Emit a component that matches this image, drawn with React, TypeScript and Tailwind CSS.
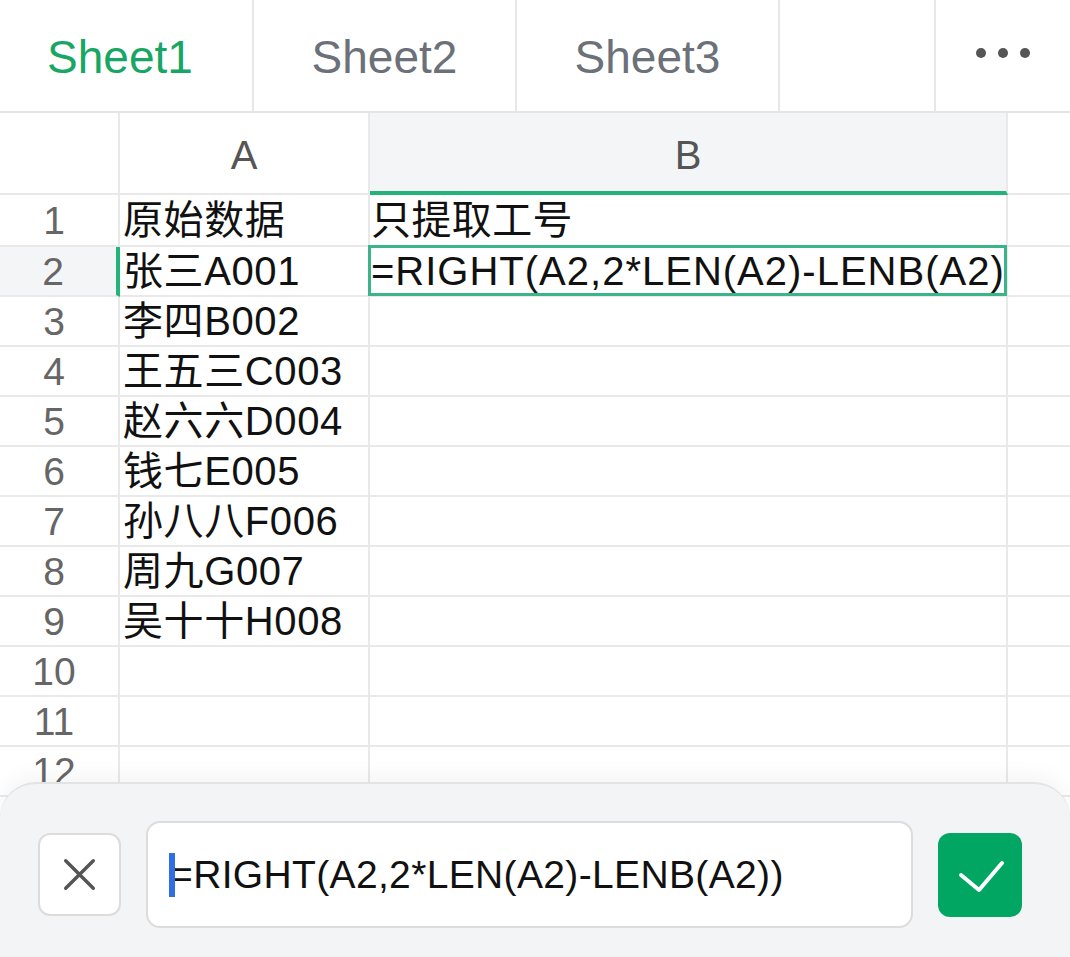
const ROWS: readonly { a: string; b: string }[] = [
  { a: '原始数据', b: '只提取工号' },
  { a: '张三A001', b: '=RIGHT(A2,2*LEN(A2)-LENB(A2)' },
  { a: '李四B002', b: '' },
  { a: '王五三C003', b: '' },
  { a: '赵六六D004', b: '' },
  { a: '钱七E005', b: '' },
  { a: '孙八八F006', b: '' },
  { a: '周九G007', b: '' },
  { a: '吴十十H008', b: '' },
  { a: '', b: '' },
  { a: '', b: '' },
  { a: '', b: '' },
]

const TABS = [
  { label: 'Sheet1', width: 'w-[254px]', active: true },
  { label: 'Sheet2', width: 'w-[263px]', active: false },
  { label: 'Sheet3', width: 'w-[263px]', active: false },
]

function TabBar() {
  return (
    <div className="flex h-[113px] border-b-2 border-[#e4e5e7]">
      {TABS.map(t => (
        <div
          key={t.label}
          className={`flex ${t.width} items-center justify-center border-r-2 border-[#e6e7e9] pt-[4px] text-[46px] ${
            t.active ? 'pr-[12px] text-[#17a663]' : 'text-[#6b7079]'
          }`}
        >
          {t.label}
        </div>
      ))}
      <div className="w-[156px] border-r-2 border-[#e6e7e9]" />
      <div className="flex flex-1 items-center justify-center gap-[12px] pb-[6px]">
        <span className="h-[10px] w-[10px] rounded-full bg-[#555]" />
        <span className="h-[10px] w-[10px] rounded-full bg-[#555]" />
        <span className="h-[10px] w-[10px] rounded-full bg-[#555]" />
      </div>
    </div>
  )
}

function HeaderRow() {
  return (
    <div className="flex h-[82px] text-[40px] text-[#555]">
      <div className="w-[120px] border-r-2 border-b-2 border-[#e9e9e9]" />
      <div className="flex w-[250px] items-center justify-center border-r-2 border-b-2 border-[#e9e9e9] pt-[4px]">
        A
      </div>
      <div className="flex w-[638px] items-center justify-center border-r-2 border-r-[#e9e9e9] border-b-4 border-b-[#22b47a] bg-[#f3f5f6] pt-[6px]">
        B
      </div>
      <div className="flex-1 border-b-2 border-[#e9e9e9]" />
    </div>
  )
}

function GridRow({ index, a, b }: { index: number; a: string; b: string }) {
  const selected = index === 2
  const height = index === 1 ? 'h-[52px]' : 'h-[50px]'
  return (
    <div className={`flex ${height}`}>
      <div
        className={`flex w-[120px] items-center justify-center border-b-2 border-b-[#e9e9e9] pr-[10px] text-[39px] leading-none text-[#666] ${
          selected ? 'border-r-4 border-r-[#22b47a] bg-[#f3f5f6]' : 'border-r-2 border-r-[#e9e9e9]'
        }`}
      >
        {index}
      </div>
      <div className="flex w-[250px] items-center whitespace-nowrap border-r-2 border-b-2 border-[#e9e9e9] pl-[3px] text-[40px] leading-none tracking-[0.6px] text-[#111]">
        {a}
      </div>
      <div
        className={`relative flex w-[638px] items-center whitespace-nowrap border-r-2 border-b-2 border-[#e9e9e9] pl-[1px] text-[40px] leading-none text-[#111] ${
          selected ? 'tracking-[1px]' : 'tracking-[0.4px]'
        }`}
      >
        {b}
        {selected && (
          <div className="absolute -top-[2px] -left-[2px] -right-[1px] -bottom-[1px] border-[3px] border-[#3cb489]" />
        )}
      </div>
      <div className="flex-1 border-b-2 border-[#e9e9e9]" />
    </div>
  )
}

function EditPanel() {
  return (
    <div className="absolute inset-x-0 bottom-0 flex h-[175px] items-center rounded-t-[36px] border-t-2 border-[#e1e3e5] bg-[#f2f4f5] pl-[38px] pr-[48px] pt-[8px] shadow-[0_-8px_20px_rgba(0,0,0,0.04)]">
      <div className="flex h-[83px] w-[83px] items-center justify-center rounded-[12px] border-2 border-[#dcdcdc] bg-white">
        <svg width="83" height="83" viewBox="0 0 83 83" fill="none">
          <path d="M27 27 L56 56 M56 27 L27 56" stroke="#555" strokeWidth="3.6" strokeLinecap="round" />
        </svg>
      </div>
      <div className="ml-[25px] flex h-[107px] w-[767px] items-center rounded-[14px] border-2 border-[#dcdcdc] bg-white pl-[22px] text-[39px] leading-none tracking-[0.35px] text-[#111]">
        <span className="relative whitespace-nowrap">
          =RIGHT(A2,2*LEN(A2)-LENB(A2))
          <span className="absolute -left-[1px] top-1/2 h-[44px] w-[6px] -translate-y-1/2 bg-[#2f6fe6]" />
        </span>
      </div>
      <div className="ml-[25px] flex h-[84px] w-[84px] items-center justify-center rounded-[12px] bg-[#00a661]">
        <svg width="84" height="84" viewBox="0 0 84 84" fill="none">
          <path d="M23 42 L41 57 L64 30" stroke="#fff" strokeWidth="4" strokeLinecap="round" strokeLinejoin="round" />
        </svg>
      </div>
    </div>
  )
}

export default function App() {
  return (
    <div className="relative h-[957px] w-[1070px] overflow-hidden bg-white font-['Liberation_Sans','Noto_Sans_CJK_SC',sans-serif]">
      <TabBar />
      <HeaderRow />
      {ROWS.map((r, i) => (
        <GridRow key={i} index={i + 1} a={r.a} b={r.b} />
      ))}
      <EditPanel />
    </div>
  )
}
